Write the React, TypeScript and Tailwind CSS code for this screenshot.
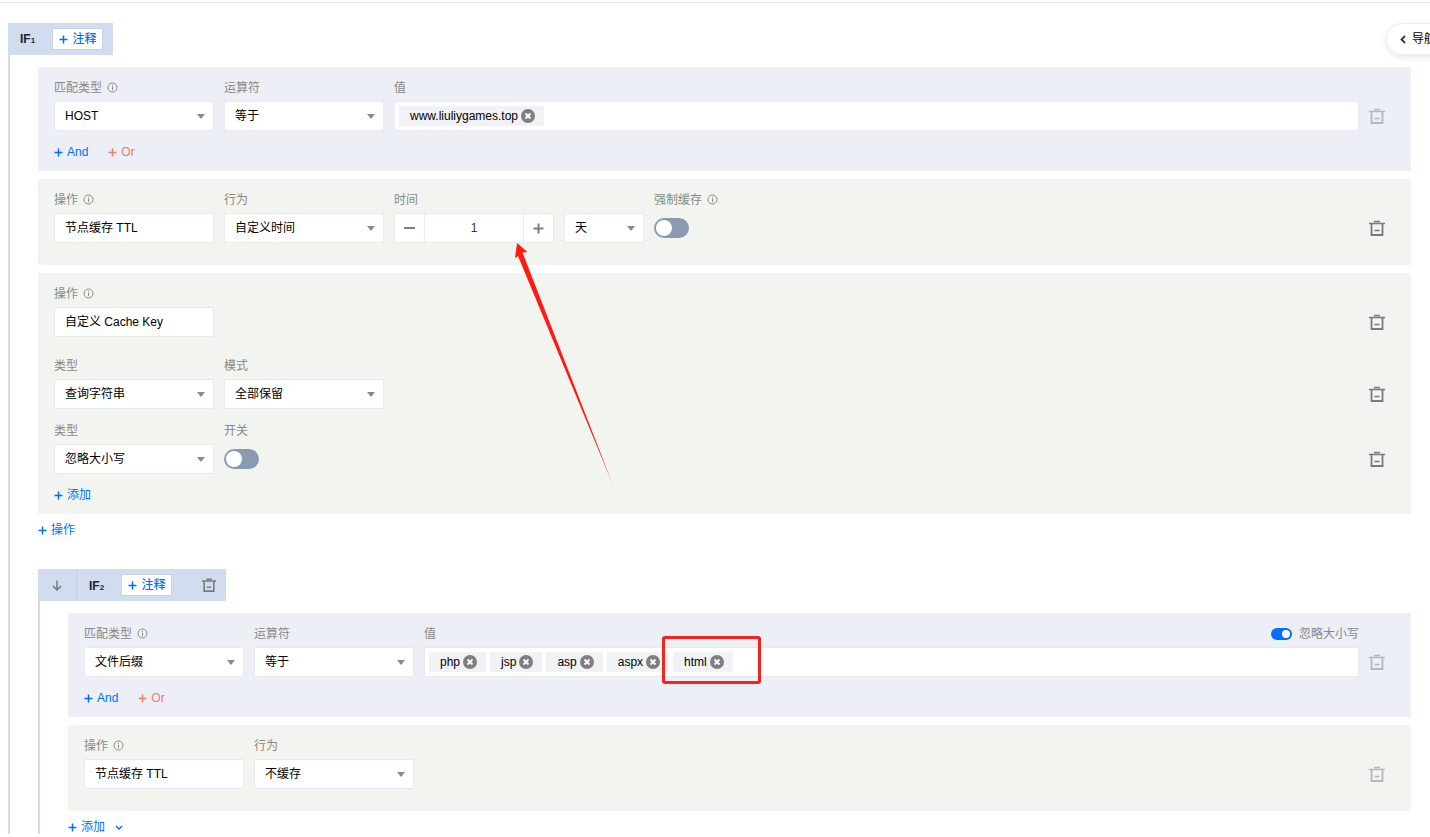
import React from "react";

function Info() {
  return (
    <svg width="11" height="11" viewBox="0 0 11 11" className="ml-[5px] shrink-0" fill="none">
      <circle cx="5.5" cy="5.5" r="4.5" stroke="#8a8a8a" strokeWidth="1" />
      <rect x="5" y="2.8" width="1" height="1" fill="#8a8a8a" />
      <rect x="5" y="4.6" width="1" height="3.6" fill="#8a8a8a" />
    </svg>
  );
}

function Trash({ light = false }: { light?: boolean }) {
  const c = light ? "#b4b7bc" : "#76797e";
  return (
    <svg width="16" height="16" viewBox="0 0 16 16" fill="none" className="shrink-0">
      <path d="M5 1.5h6M0 3.5h16" stroke={c} strokeWidth="1.6" />
      <path d="M2.5 4v11h11V4" stroke={c} strokeWidth="1.8" />
      <path d="M5.5 10.500h5" stroke={c} strokeWidth="1.6" />
    </svg>
  );
}

function Plus({ color = "#006eff" }: { color?: string }) {
  return (
    <svg width="9" height="9" viewBox="0 0 9 9" className="shrink-0">
      <path d="M4.5 0.5v8M0.5 4.5h8" stroke={color} strokeWidth="1.5" />
    </svg>
  );
}

function Label({ children, info, className = "w-[160px]" }: { children: React.ReactNode; info?: boolean; className?: string }) {
  return (
    <div className={`flex h-[22px] items-start text-[12px] leading-[18px] text-[#888] ${className}`}>
      <span>{children}</span>
      {info && <span className="mt-[3px]"><Info /></span>}
    </div>
  );
}

function Select({ value, w = "w-[160px]" }: { value: string; w?: string }) {
  return (
    <div className={`flex h-[30px] items-center justify-between border border-[#e6e9f0] bg-white pl-[10px] pr-[8px] text-[12px] text-black ${w}`}>
      <span>{value}</span>
      <svg width="8" height="5" viewBox="0 0 8 5"><path d="M0 0h8L4 5z" fill="#888" /></svg>
    </div>
  );
}

function Plain({ value }: { value: string }) {
  return (
    <div className="flex h-[30px] w-[160px] items-center border border-[#e6e9f0] bg-white pl-[10px] text-[12px] text-black">
      {value}
    </div>
  );
}

function Field({ label, info, children, w = "w-[160px]" }: { label: string; info?: boolean; children: React.ReactNode; w?: string }) {
  return (
    <div className={`flex flex-col ${w}`}>
      <Label info={info} className="w-full">{label}</Label>
      {children}
    </div>
  );
}

function Toggle({ small = false }: { small?: boolean }) {
  if (small) {
    return (
      <div className="flex h-[12px] w-[21px] items-center justify-end rounded-full bg-[#006eff] pr-[2px]">
        <div className="h-[8px] w-[8px] rounded-full bg-white" />
      </div>
    );
  }
  return (
    <div className="flex h-[20px] w-[35px] items-center rounded-full bg-[#8a9ab2] pl-[2px]">
      <div className="h-[16px] w-[16px] rounded-full bg-white" />
    </div>
  );
}

function TagX() {
  return (
    <svg width="14" height="14" viewBox="0 0 14 14" className="shrink-0">
      <circle cx="7" cy="7" r="7" fill="#7f7f7f" />
      <path d="M4.5 4.5l5 5M9.5 4.5l-5 5" stroke="#fff" strokeWidth="1.8" />
    </svg>
  );
}

function Tag({ text }: { text: string }) {
  return (
    <div className="flex h-[20px] items-center gap-[3px] bg-[#f1f2f5] pl-[11px] pr-[9px] text-[12px] text-black">
      <span>{text}</span>
      <TagX />
    </div>
  );
}

function TrashCell({ light }: { light?: boolean }) {
  return (
    <div className="ml-auto flex h-[30px] w-[16px] items-center">
      <Trash light={light} />
    </div>
  );
}

function AddLink({ text, color = "#006eff" }: { text: string; color?: string }) {
  return (
    <div className="flex h-[20px] items-center gap-[4px] text-[12px]" style={{ color }}>
      <Plus color={color} />
      <span>{text}</span>
    </div>
  );
}

function Note() {
  return (
    <div className="flex h-[22px] w-[51px] items-center justify-center gap-[5px] border border-[#c3d2ea] bg-white text-[12px] font-bold text-[#006eff]">
      <Plus />
      <span className="font-medium">注释</span>
    </div>
  );
}

function Sub({ n }: { n: string }) {
  return (
    <span className="text-[12px] font-bold text-[#1a1f2b]">
      IF<span className="text-[8px]">{n}</span>
    </span>
  );
}

function Condition({ type, children, extra }: { type: string; children: React.ReactNode; extra?: React.ReactNode }) {
  return (
    <div className="bg-[#ecEFF6] pb-[9px] pl-[16px] pr-[26px] pt-[12px]">
      <div className="flex items-end gap-[10px]">
        <Field label="匹配类型" info><Select value={type} /></Field>
        <Field label="运算符"><Select value="等于" /></Field>
        <div className="flex min-w-0 flex-1 flex-col">
          <div className="flex h-[22px] justify-between">
            <Label className="w-auto">值</Label>
            {extra}
          </div>
          <div className="flex h-[30px] items-center gap-[4px] border border-[#e6e9f0] bg-white pl-[4px]">
            {children}
          </div>
        </div>
        <TrashCell light />
      </div>
      <div className="mt-[11px] flex gap-[20px]">
        <AddLink text="And" />
        <AddLink text="Or" color="#e87e62" />
      </div>
    </div>
  );
}

export default function App() {
  return (
    <div
      className="relative h-[837px] w-[1430px] overflow-hidden bg-white pt-[2px]"
      style={{ fontFamily: '"Liberation Sans", "Noto Sans CJK SC", sans-serif' }}
    >
      <div className="h-px bg-[#e8e8f2]" />

      <div className="ml-[8px] mr-[19px] mt-[20px]">
        <div className="flex h-[32px] w-[105px] items-center bg-[#d1dcee] pl-[12px]">
          <Sub n="1" />
          <div className="ml-[17px]"><Note /></div>
        </div>

        <div className="border-l-2 border-[#d1dcee] pl-[28px] pt-[12px]">
          <div className="flex flex-col gap-[8px]">
            <Condition type="HOST">
              <Tag text="www.liuliygames.top" />
            </Condition>

            <div className="bg-[#f2f5ef] pb-[22px] pl-[16px] pr-[26px] pt-[12px]">
              <div className="flex items-end gap-[10px]">
                <Field label="操作" info><Plain value="节点缓存 TTL" /></Field>
                <Field label="行为"><Select value="自定义时间" /></Field>
                <Field label="时间">
                  <div className="flex h-[30px] w-[160px] border border-[#e6e9f0] bg-white text-[12px] text-[#333]">
                    <div className="flex w-[30px] items-center justify-center border-r border-[#e6e9f0]">
                      <svg width="11" height="2" viewBox="0 0 11 2"><rect width="11" height="2" fill="#808080" /></svg>
                    </div>
                    <div className="flex flex-1 items-center justify-center">1</div>
                    <div className="flex w-[30px] items-center justify-center border-l border-[#e6e9f0]">
                      <svg width="11" height="11" viewBox="0 0 11 11"><path d="M5.5 0.5v10M0.5 5.5h10" stroke="#808080" strokeWidth="2" /></svg>
                    </div>
                  </div>
                </Field>
                <Select value="天" w="w-[80px]" />
                <Field label="强制缓存" info w="w-[80px]">
                  <div className="flex h-[30px] items-center"><Toggle /></div>
                </Field>
                <TrashCell />
              </div>
            </div>

            <div className="bg-[#f2f5ef] pb-[9px] pl-[16px] pr-[26px] pt-[12px]">
              <div className="flex items-end gap-[10px]">
                <Field label="操作" info><Plain value="自定义 Cache Key" /></Field>
                <TrashCell />
              </div>
              <div className="mt-[20px] flex items-end gap-[10px]">
                <Field label="类型"><Select value="查询字符串" /></Field>
                <Field label="模式"><Select value="全部保留" /></Field>
                <TrashCell />
              </div>
              <div className="mt-[13px] flex items-end gap-[10px]">
                <Field label="类型"><Select value="忽略大小写" /></Field>
                <Field label="开关">
                  <div className="flex h-[30px] items-center"><Toggle /></div>
                </Field>
                <TrashCell />
              </div>
              <div className="mt-[11px]"><AddLink text="添加" /></div>
            </div>
          </div>

          <div className="mt-[6px]"><AddLink text="操作" /></div>

          <div className="mt-[29px] flex h-[32px] w-[188px] items-center bg-[#d1dcee]">
            <div className="flex h-full w-[39px] items-center justify-center border-r border-[#c3d0e4]">
              <svg width="10" height="11" viewBox="0 0 10 11" fill="none">
                <path d="M5 0.5v9.500M1 6l4 4 4-4" stroke="#777" strokeWidth="1.5" />
              </svg>
            </div>
            <div className="ml-[12px]"><Sub n="2" /></div>
            <div className="ml-[17px]"><Note /></div>
            <div className="ml-[30px]">
              <svg width="14" height="14" viewBox="0 0 16 16" fill="none">
                <path d="M5 1.5h6M0 3.5h16" stroke="#76797e" strokeWidth="1.6" />
                <path d="M2.5 4v11h11V4" stroke="#76797e" strokeWidth="1.8" />
                <path d="M5.5 10.500h5" stroke="#76797e" strokeWidth="1.6" />
              </svg>
            </div>
          </div>

          <div className="h-[233px] border-l-2 border-[#d1dcee] pl-[28px] pt-[12px]">
            <div className="flex flex-col gap-[8px]">
              <Condition
                type="文件后缀"
                extra={
                  <div className="flex h-[18px] items-center gap-[7px] text-[12px] text-[#888]">
                    <Toggle small />
                    <span>忽略大小写</span>
                  </div>
                }
              >
                <Tag text="php" />
                <Tag text="jsp" />
                <Tag text="asp" />
                <Tag text="aspx" />
                <Tag text="html" />
              </Condition>

              <div className="bg-[#f2f5ef] pb-[22px] pl-[16px] pr-[26px] pt-[12px]">
                <div className="flex items-end gap-[10px]">
                  <Field label="操作" info><Plain value="节点缓存 TTL" /></Field>
                  <Field label="行为"><Select value="不缓存" /></Field>
                  <TrashCell light />
                </div>
              </div>
            </div>
            <div className="mt-[6px] flex h-[20px] items-center gap-[10px]">
              <AddLink text="添加" />
              <svg width="8" height="5" viewBox="0 0 8 5" fill="none"><path d="M1 1l3 3 3-3" stroke="#1d6fd8" strokeWidth="1.5" /></svg>
            </div>
          </div>
        </div>
      </div>

      {/* floating nav pill */}
      <div className="absolute left-[1386px] top-[23px] flex h-[32px] w-[80px] items-center rounded-l-full border border-[#eceef4] bg-white pl-[13px] text-[12px] text-black shadow-[0_2px_6px_rgba(54,58,80,0.12)]">
        <svg width="6" height="9" viewBox="0 0 6 9" fill="none" className="mr-[6px]"><path d="M5 1L1.500 4.500 5 8" stroke="#333" strokeWidth="1.8" /></svg>
        <span className="whitespace-nowrap">导航</span>
      </div>

      {/* annotation: arrow */}
      <svg className="pointer-events-none absolute left-0 top-0" width="1430" height="837" viewBox="0 0 1430 837">
        <path d="M517 243L527.500 252L522.500 252.500L613 485L518 256L515 258Z" fill="#ff1a12" />
      </svg>

      {/* annotation: highlight box */}
      <div className="pointer-events-none absolute left-[662px] top-[636px] h-[48px] w-[99px] rounded-[3px] border-[3px] border-[#f5231c]" />
    </div>
  );
}
